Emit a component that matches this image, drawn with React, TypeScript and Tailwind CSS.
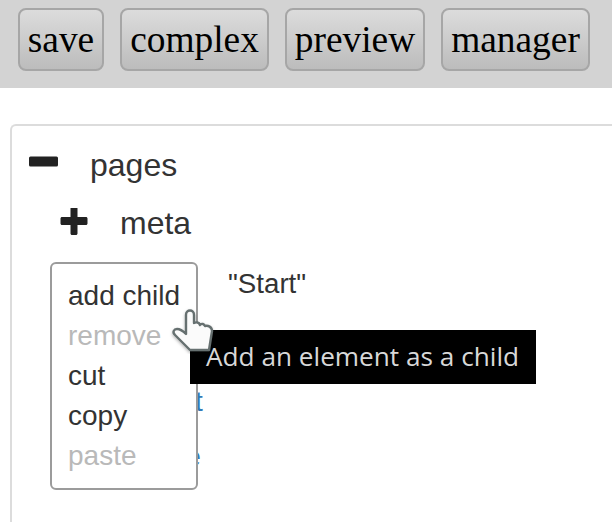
export default function App() {
  const buttons = [
    { label: "save", width: "w-[86px]" },
    { label: "complex", width: "w-[149px]" },
    { label: "preview", width: "w-[140px]" },
    { label: "manager", width: "w-[149px]" },
  ];
  return (
    <div className="relative h-[522px] w-[612px] overflow-hidden bg-white font-['Liberation_Sans',sans-serif] text-[#333]">
      <header className="flex h-[88px] items-start gap-4 bg-[#d3d3d3] pl-[18px] pt-2">
        {buttons.map((b) => (
          <button
            key={b.label}
            className={`flex h-[63px] items-center justify-center rounded-lg border-2 border-[#a6a6a6] bg-gradient-to-b from-[#dcdcdc] to-[#bcbcbc] font-['Liberation_Serif',serif] text-[37.4px] leading-none text-black ${b.width}`}
          >
            {b.label}
          </button>
        ))}
      </header>
      <main className="ml-[10px] mt-9 h-[420px] rounded-tl-md border-l-2 border-t-2 border-[#dcdcdc]">
        <div className="flex h-[78px] items-center pl-[17px] text-[32px]">
          <svg width="30" height="30" viewBox="0 0 30 30" className="mr-[31px]">
            <rect x="0" y="6.5" width="29" height="10" rx="1.5" fill="#222" />
          </svg>
          <span>pages</span>
        </div>
        <div className="flex h-[40px] items-center pb-[2px] pl-[47px] text-[32px]">
          <svg width="30" height="30" viewBox="0 2 30 30" className="mr-[31px]">
            <path d="M11.5 2.5c0-.8.7-1.5 1.5-1.5h4c.8 0 1.5.7 1.5 1.5V11h8.500c.8 0 1.500.7 1.500 1.500v5c0 .8-.7 1.500-1.500 1.500h-8.500v8.500c0 .8-.7 1.500-1.500 1.500h-4c-.8 0-1.500-.7-1.500-1.500V19H3c-.8 0-1.500-.7-1.500-1.500v-5C1.500 11.700 2.200 11 3 11h8.500z" fill="#222" />
          </svg>
          <span>meta</span>
        </div>
        <div className="ml-[216px] mt-5 text-[27.7px] leading-10">"Start"</div>
        <div className="ml-[116px] mt-[78px] text-[28px] leading-10 text-[#337ab7]">layout</div>
        <div className="ml-[97px] mt-[15px] text-[28px] leading-10 text-[#337ab7]">module</div>
      </main>

      <ul className="absolute left-[50px] top-[262px] h-[228px] w-[148px] rounded-md border-2 border-[#9b9b9b] bg-white pl-4 pt-3 text-[28px] leading-10">
        <li>add child</li>
        <li className="text-[#b9b9b9]">remove</li>
        <li>cut</li>
        <li>copy</li>
        <li className="text-[#b9b9b9]">paste</li>
      </ul>

      <div className="absolute left-[190px] top-[330px] flex h-[54px] w-[346px] items-center bg-black pb-[2px] pl-4 font-['Open_Sans',sans-serif] text-[26.2px] leading-none text-[#d8d8d8]">
        Add an element as a child
      </div>

      <svg width="50" height="50" viewBox="0 0 50 50" className="absolute left-[168px] top-[304px]">
        <defs>
          <filter id="s" x="-30%" y="-30%" width="160%" height="160%">
            <feDropShadow dx="0" dy="1.5" stdDeviation="1.5" floodColor="#000" floodOpacity="0.3" />
          </filter>
        </defs>
        <path
          d="M22 46 L7 31 C4 28 6 25 9 25 C12 25 15 27 18 30 L18 11 C18 5 26 5 26 11 L26 19 C28 18 31 18 32 21 C34 19 36 20 37 22 C40 21 44 23 44 27 L41 46 Z"
          fill="#fbfbfb"
          stroke="#667070"
          strokeWidth="2.4"
          strokeLinejoin="round"
          filter="url(#s)"
        />
      </svg>
    </div>
  );
}
